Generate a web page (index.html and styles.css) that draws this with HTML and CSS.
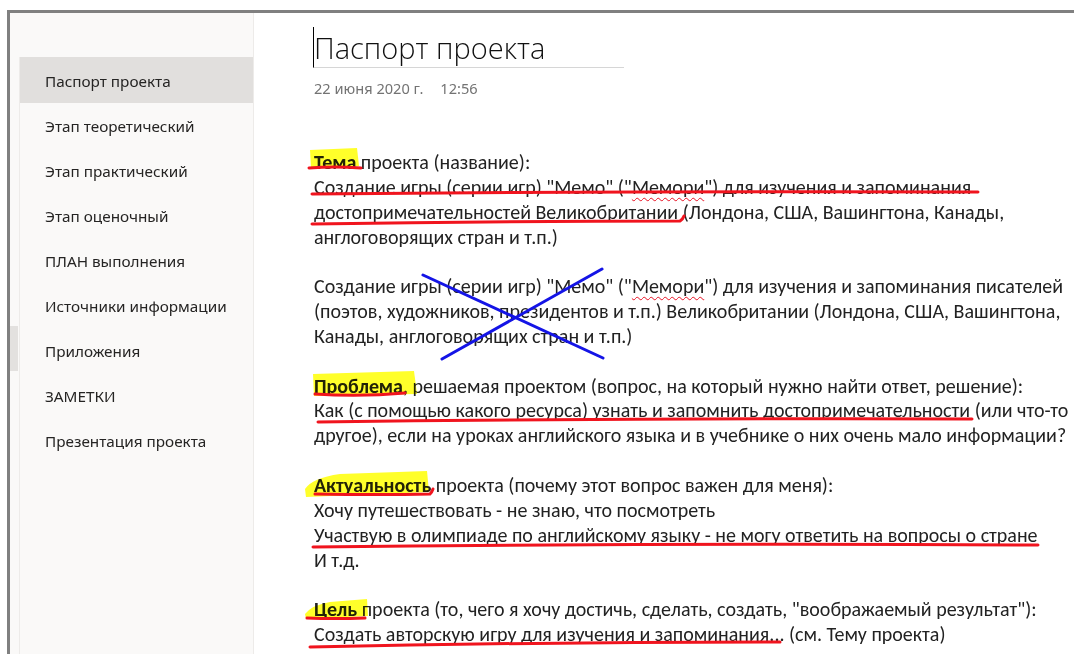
FILE: index.html
```html
<!DOCTYPE html>
<html lang="ru">
<head>
<meta charset="utf-8">
<title>Паспорт проекта</title>
<link rel="stylesheet" href="styles.css">
</head>
<body>
<div class="app">
  <aside class="sidebar">
    <div class="sidebar-head"></div>
    <div class="sidebar-body">
      <div class="rail"><div class="rail-thumb"></div></div>
      <nav class="pages">
        <div class="page-item is-active">Паспорт проекта</div>
        <div class="page-item">Этап теоретический</div>
        <div class="page-item">Этап практический</div>
        <div class="page-item">Этап оценочный</div>
        <div class="page-item">ПЛАН выполнения</div>
        <div class="page-item">Источники информации</div>
        <div class="page-item">Приложения</div>
        <div class="page-item">ЗАМЕТКИ</div>
        <div class="page-item">Презентация проекта</div>
      </nav>
    </div>
  </aside>

  <main class="note">
    <h1 class="note-title">Паспорт проекта</h1>
    <div class="note-meta"><span>22 июня 2020 г.</span><span>12:56</span></div>

    <div class="note-body">
      <p><b>Тема</b> проекта (название):<br>
      Создание игры (серии игр) "Мемо" ("<span class="spell">Мемори</span>") для изучения и запоминания<br>
      достопримечательностей Великобритании (Лондона, США, Вашингтона, Канады,<br>
      англоговорящих стран и т.п.)</p>

      <p>Создание игры (серии игр) "Мемо" ("<span class="spell">Мемори</span>") для изучения и запоминания писателей<br>
      (поэтов, художников, президентов и т.п.) Великобритании (Лондона, США, Вашингтона,<br>
      Канады, англоговорящих стран и т.п.)</p>

      <p><b>Проблема</b>, решаемая проектом (вопрос, на который нужно найти ответ, решение):<br>
      Как (с помощью какого ресурса) узнать и запомнить достопримечательности (или что-то<br>
      другое), если на уроках английского языка и в учебнике о них очень мало информации?</p>

      <p><b>Актуальность</b> проекта (почему этот вопрос важен для меня):<br>
      Хочу путешествовать - не знаю, что посмотреть<br>
      Участвую в олимпиаде по английскому языку - не могу ответить на вопросы о стране<br>
      И т.д.</p>

      <p><b>Цель</b> проекта (то, чего я хочу достичь, сделать, создать, "воображаемый результат"):<br>
      Создать авторскую игру для изучения и запоминания... (см. Тему проекта)</p>
    </div>
  </main>
</div>

<!-- handwritten ink: highlighter marks, red underlines and the blue cross -->
<svg class="ink" width="1074" height="654" viewBox="0 0 1074 654" aria-hidden="true">
  <g class="ink-marker">
    <path d="M310 150 L357 148 L359 166 L311 168 Z"/>
    <path d="M313 374 L414 371 L417 394 L314 396 Z"/>
    <path d="M305 489 Q312 478 340 474 L427 471 L429 492 L306 497 Z"/>
    <path d="M305 614 Q312 605 330 602 L367 599 L368 616 L306 619 Z"/>
  </g>
  <g class="ink-red">
    <path d="M309 168 Q335 166 361 168"/>
    <path d="M312 194 Q640 191 978 192"/>
    <path d="M312 224 Q500 221 680 221 Q683 219 684 216"/>
    <path d="M315 394 Q360 397 405 393"/>
    <path d="M318 422 Q640 418 972 419"/>
    <path d="M315 494 Q380 495 430 494 Q432 492 433 489"/>
    <path d="M313 547 Q680 543 1038 545"/>
    <path d="M307 618 Q335 619 365 618"/>
    <path d="M310 647 Q540 642 780 642"/>
  </g>
  <g class="ink-blue">
    <path d="M423 275 L603 358"/>
    <path d="M442 359 L602 269"/>
  </g>
</svg>
</body>
</html>
```

FILE: styles.css
```css
html, body {
  margin: 0;
  padding: 0;
  background: #ffffff;
  overflow: hidden;
}

body {
  width: 1074px;
  height: 654px;
  position: relative;
}

/* window frame: only its top and left edges are in view */
.app {
  box-sizing: border-box;
  margin: 10px 0 0 7px;
  height: 644px;
  border-top: 3px solid #808080;
  border-left: 3px solid #808080;
  display: flex;
}

/* ---------- page list ---------- */
.sidebar {
  width: 243px;
  flex: none;
  background: #faf9f8;
  border-right: 1px solid #edebe9;
  display: flex;
  flex-direction: column;
}

.sidebar-head {
  height: 44px;
  flex: none;
}

.sidebar-body {
  flex: 1;
  display: flex;
}

.rail {
  width: 9px;
  flex: none;
  border-right: 1px solid #edebe9;
  padding-top: 269px;
}

.rail-thumb {
  width: 8px;
  height: 45px;
  background: #e3e1df;
}

.pages {
  flex: 1;
  font-family: "Segoe UI", "Noto Sans", sans-serif;
  font-size: 15.3px;
  color: #252423;
}

.page-item {
  height: 45px;
  line-height: 47px;
  padding-left: 25px;
  white-space: nowrap;
}

.page-item.is-active {
  height: 46px;
  line-height: 48px;
  background: #e1dfdd;
}

/* ---------- note ---------- */
.note {
  flex: 1;
  padding-left: 60px;
  min-width: 0;
}

.note-title {
  box-sizing: border-box;
  margin: 14px 0 0 -1px;
  width: 311px;
  height: 41px;
  border-left: 1px solid #000000;
  border-bottom: 1px solid #d6d6d6;
  font-family: "Segoe UI", "Open Sans", sans-serif;
  font-weight: 300;
  font-size: 29px;
  line-height: 41px;
  color: #111111;
  white-space: nowrap;
}

.note-meta {
  margin-top: 11px;
  height: 18px;
  line-height: 18px;
  font-family: "Segoe UI", "Noto Sans", sans-serif;
  font-size: 14.6px;
  color: #737373;
  display: flex;
  gap: 17px;
}

.note-body {
  margin-top: 53px;
  font-family: "Carlito", "Calibri", "Roboto", sans-serif;
  font-size: 20px;
  line-height: 24.85px;
  color: #222222;
  white-space: nowrap;
}

.note-body p {
  margin: 0 0 24.85px 0;
}

.note-body b {
  font-weight: 700;
}

.spell {
  text-decoration: underline wavy #e81123;
  text-decoration-thickness: 1px;
  text-underline-offset: 3px;
}

/* ---------- ink layer over the note ---------- */
.ink {
  position: absolute;
  left: 0;
  top: 0;
  pointer-events: none;
}

.ink-marker path {
  fill: #ffff2a;
  mix-blend-mode: multiply;
}

.ink-red path {
  fill: none;
  stroke: #f0141e;
  stroke-width: 3;
  stroke-linecap: round;
}

.ink-blue path {
  fill: none;
  stroke: #1414e6;
  stroke-width: 3;
  stroke-linecap: round;
}
```
